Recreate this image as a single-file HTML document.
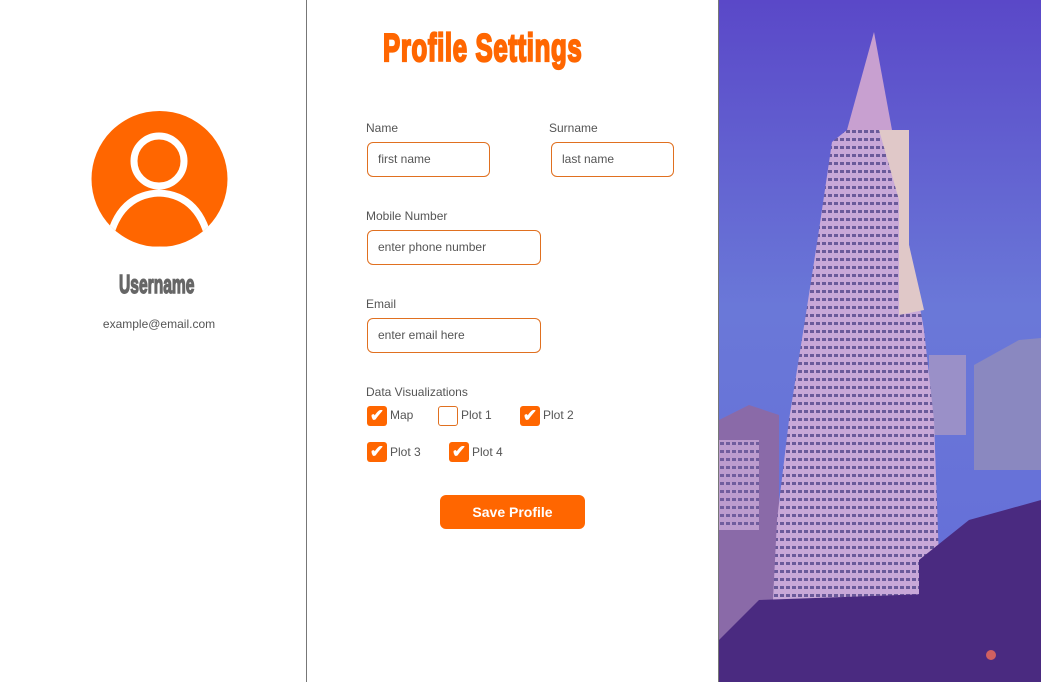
<!DOCTYPE html>
<html><head><meta charset="utf-8"><style>
*{margin:0;padding:0;box-sizing:border-box}
body{width:1041px;height:682px;overflow:hidden;background:#fff;font-family:"Liberation Sans",Arial,sans-serif;position:relative}
.div{position:absolute;top:0;width:1px;height:682px;background:#777}
.title{position:absolute;left:383px;top:27px;font-weight:bold;font-size:39px;color:#ff6600;transform:scaleX(0.66);transform-origin:left top;white-space:nowrap;-webkit-text-stroke:2.2px #ff6600;letter-spacing:1px}
.lbl{position:absolute;font-size:12px;color:#555}
.in{position:absolute;height:35px;border:1.5px solid #e07020;border-radius:6px;font-size:12px;color:#555;padding-left:10px;line-height:32px}
.cb{position:absolute;width:20px;height:20px;border-radius:3px;background:#ff6600;color:#fff;font-size:17px;line-height:20px;text-align:center;font-weight:bold}
.cb.off{background:#fff;border:1.5px solid #e07020}
.cl{position:absolute;font-size:12px;color:#555}
.btn{position:absolute;left:440px;top:495px;width:145px;height:34px;background:#ff6600;border-radius:6px;color:#fff;font-weight:bold;font-size:14px;text-align:center;line-height:34px}
</style></head><body>
<div class="div" style="left:306px"></div>
<div class="div" style="left:718px"></div>

<svg style="position:absolute;left:91px;top:109px" width="137" height="142" viewBox="0 0 137 142">
<defs><clipPath id="c"><circle cx="68.5" cy="70" r="68"/></clipPath></defs>
<circle cx="68.5" cy="70" r="68" fill="#ff6600"/>
<g clip-path="url(#c)">
<circle cx="68" cy="52" r="25" fill="none" stroke="#fff" stroke-width="7"/>
<path d="M16 142 Q24 86 68 84 Q112 86 120 142" fill="none" stroke="#fff" stroke-width="7"/>
<path d="M0 130 Q68 150 137 130" fill="none" stroke="#fff" stroke-width="5"/>
</g>
</svg>
<div style="position:absolute;left:119px;top:269px;font-weight:bold;font-size:26px;color:#666;transform:scaleX(0.6);transform-origin:left top;white-space:nowrap;-webkit-text-stroke:1.4px #666">Username</div>
<div style="position:absolute;left:0;width:318px;top:317px;text-align:center;font-size:12px;color:#555">example@email.com</div>

<div class="title">Profile Settings</div>
<div class="lbl" style="left:366px;top:121px">Name</div>
<div class="lbl" style="left:549px;top:121px">Surname</div>
<div class="in" style="left:367px;top:142px;width:123px">first name</div>
<div class="in" style="left:551px;top:142px;width:123px">last name</div>
<div class="lbl" style="left:366px;top:209px">Mobile Number</div>
<div class="in" style="left:367px;top:230px;width:174px">enter phone number</div>
<div class="lbl" style="left:366px;top:297px">Email</div>
<div class="in" style="left:367px;top:318px;width:174px">enter email here</div>
<div class="lbl" style="left:366px;top:385px">Data Visualizations</div>
<div class="cb" style="left:367px;top:406px">✔</div><div class="cl" style="left:390px;top:408px">Map</div>
<div class="cb off" style="left:438px;top:406px"></div><div class="cl" style="left:461px;top:408px">Plot 1</div>
<div class="cb" style="left:520px;top:406px">✔</div><div class="cl" style="left:543px;top:408px">Plot 2</div>
<div class="cb" style="left:367px;top:442px">✔</div><div class="cl" style="left:390px;top:445px">Plot 3</div>
<div class="cb" style="left:449px;top:442px">✔</div><div class="cl" style="left:472px;top:445px">Plot 4</div>
<div class="btn">Save Profile</div>

<svg style="position:absolute;left:719px;top:0" width="322" height="682" viewBox="0 0 322 682">
<defs>
<linearGradient id="sky" x1="0" y1="0" x2="0" y2="1">
<stop offset="0" stop-color="#5a48c8"/><stop offset="0.45" stop-color="#6a78d8"/><stop offset="0.8" stop-color="#6670d8"/><stop offset="1" stop-color="#5a3aaa"/>
</linearGradient>
<pattern id="win" width="6" height="8" patternUnits="userSpaceOnUse">
<rect width="6" height="8" fill="#c8a8d8"/><rect x="1" y="2" width="4" height="3" fill="#6a5a9a"/>
</pattern>
</defs>
<rect width="322" height="682" fill="url(#sky)"/>
<rect x="210" y="355" width="37" height="80" fill="#9a90c8"/>
<path d="M255 365 L300 340 L322 338 L322 470 L255 470Z" fill="#8a88c0"/>
<path d="M0 420 L30 405 L60 415 L60 682 L0 682Z" fill="#8a6aa8"/>
<rect x="0" y="440" width="40" height="90" fill="url(#win)" opacity="0.8"/>
<path d="M155 32 L128 130 L173 130Z" fill="#c8a0d0"/>
<path d="M113 142 L128 130 L190 130 L190 245 L205 330 L215 420 L220 560 L210 640 L52 640 L58 520 L70 420 L86 320 L100 230Z" fill="url(#win)"/>
<path d="M160 130 L190 130 L190 245 L205 310 L180 315 L180 200Z" fill="#e0c8c8"/>
<path d="M200 560 L250 520 L322 500 L322 682 L200 682Z" fill="#4a2a80"/>
<path d="M40 600 L322 590 L322 682 L0 682 L0 640Z" fill="#4a2a80"/>
<circle cx="272" cy="655" r="5" fill="#d06060"/>
</svg>
</body></html>
